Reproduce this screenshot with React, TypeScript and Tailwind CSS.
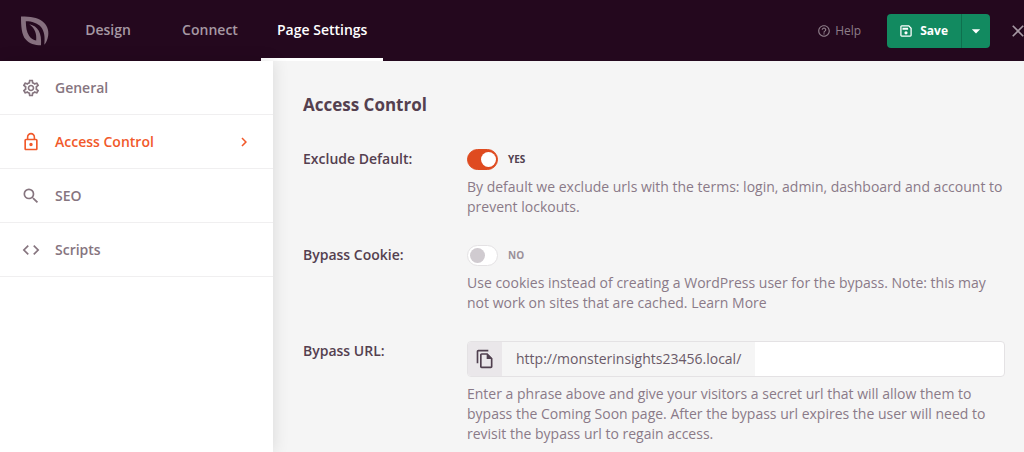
import { useState } from 'react';
import type { ReactNode } from 'react';
import {
  MdArrowDropDown,
  MdChevronRight,
  MdClose,
  MdCode,
  MdHelpOutline,
  MdLockOutline,
  MdOutlineFileCopy,
  MdOutlineSettings,
  MdSearch,
} from 'react-icons/md';

const tabs = ['Design', 'Connect', 'Page Settings'];

const sections = [
  { name: 'General', icon: MdOutlineSettings },
  { name: 'Access Control', icon: MdLockOutline },
  { name: 'SEO', icon: MdSearch },
  { name: 'Scripts', icon: MdCode },
];

function Logo() {
  return (
    <svg viewBox="0 0 28 30" className="h-[30px] w-7 shrink-0" aria-hidden="true">
      <path
        fill="#86707f"
        d="M0 .4C10 .4 16 1.200 21 5C26 8.800 28 14 27.200 19.500C26.600 23.500 25.400 26.500 23.300 28.700C24 21.500 23.600 15.500 20 11C16.400 7 11 5.400 4.800 5.300C5 11.500 5.500 16 8.200 20C10 22.600 12.300 24 15.200 24.500C15.600 18 14.500 13 8.300 8.300C17 10 21 17 20 29.300C13.500 29.300 8.500 27.800 4.800 23.600C.5 18.600 0 10 0 .4Z"
      />
    </svg>
  );
}

function SaveIcon() {
  return (
    <svg viewBox="0 0 12 12" className="size-3" fill="none" stroke="currentColor" aria-hidden="true">
      <path strokeWidth="1.300" d="M1.700.9h7.100l2.300 2.300v7.100a.8.800 0 0 1-.8.800H1.700a.8.800 0 0 1-.8-.8V1.700a.8.800 0 0 1 .8-.8Z" />
      <path fill="currentColor" stroke="none" d="M2.500 2.800h5.600v2H2.500ZM4.400 7.800a1.600 1.600 0 1 1 3.200 0 1.600 1.600 0 1 1-3.200 0Z" />
    </svg>
  );
}

function Toggle({ id, defaultChecked = false }: { id: string; defaultChecked?: boolean }) {
  const [on, setOn] = useState(defaultChecked);
  return (
    <div className="flex h-[21px] items-center gap-2.5">
      <input
        id={id}
        type="checkbox"
        role="switch"
        checked={on}
        onChange={(e) => setOn(e.target.checked)}
        className="flex h-[21px] w-[31px] cursor-pointer appearance-none items-center rounded-full border border-[#e4e2e4] bg-white px-0.5 before:size-[15px] before:rounded-full before:bg-[#d0cbd0] checked:justify-end checked:border-[#df4b20] checked:bg-[#df4b20] checked:px-px checked:before:bg-white"
      />
      <span className={on ? 'text-[10px] font-bold text-[#50404f]' : 'text-[10px] font-bold text-[#9a909a]'}>
        {on ? 'YES' : 'NO'}
      </span>
    </div>
  );
}

function Field({ id, label, help, children }: { id: string; label: string; help: ReactNode; children: ReactNode }) {
  return (
    <div className="flex">
      <label htmlFor={id} className="w-41 shrink-0 text-sm leading-5 font-semibold text-[#54404f]">
        {label}
      </label>
      <div className="min-w-0 flex-1">
        {children}
        <p className="mt-[7px] text-sm leading-5 text-[#8a7a88]">{help}</p>
      </div>
    </div>
  );
}

export default function App() {
  const [tab, setTab] = useState('Page Settings');
  const [section, setSection] = useState('Access Control');

  return (
    <div className="flex h-screen flex-col overflow-hidden bg-[#f5f5f5] font-['Open_Sans',sans-serif]">
      {/* Top bar */}
      <header className="flex h-[61px] shrink-0 items-center overflow-hidden bg-[#24081e] pl-[21px]">
        <Logo />
        <nav className="ml-2 flex h-full">
          {tabs.map((name) => (
            <button
              key={name}
              type="button"
              onClick={() => setTab(name)}
              className={
                name === tab
                  ? 'min-w-[102px] border-b-3 border-white px-4 pt-0.5 text-sm font-semibold text-white'
                  : 'min-w-[102px] border-b-3 border-transparent px-4 pt-0.5 text-sm font-semibold text-[#a698a3]'
              }
            >
              {name}
            </button>
          ))}
        </nav>
        <div className="-mr-1 ml-auto flex shrink-0 items-center">
          <a href="#help" className="flex items-center gap-1 text-[12px] text-[#8d7d89]">
            <MdHelpOutline className="size-3.5" />
            Help
          </a>
          <div className="ml-[26px] flex h-[34px] overflow-hidden rounded bg-[#128a60] text-white">
            <button type="button" className="flex items-center gap-2 px-[13px] text-[12px] font-bold">
              <SaveIcon />
              Save
            </button>
            <button
              type="button"
              aria-label="More save options"
              className="flex w-[29px] items-center justify-center border-l border-[#0e704e]"
            >
              <MdArrowDropDown className="size-5" />
            </button>
          </div>
          <button type="button" aria-label="Close" className="ml-[18px] text-[#a698a3]">
            <MdClose className="size-5" />
          </button>
        </div>
      </header>

      <div className="flex min-h-0 flex-1">
        {/* Settings sections */}
        <nav className="z-10 w-[273px] shrink-0 bg-white shadow-[0_0_16px_rgba(0,0,0,0.12)]">
          {sections.map(({ name, icon: Icon }) => (
            <button
              key={name}
              type="button"
              onClick={() => setSection(name)}
              className={
                name === section
                  ? 'flex h-[54px] w-full items-center gap-3.5 border-b border-[#f0eff0] pr-5 pl-[21px] text-sm font-semibold text-[#f1592a]'
                  : 'flex h-[54px] w-full items-center gap-3.5 border-b border-[#f0eff0] pr-5 pl-[21px] text-sm font-semibold text-[#86757f]'
              }
            >
              <Icon className="size-5" />
              {name}
              {name === section && <MdChevronRight className="ml-auto size-[18px]" />}
            </button>
          ))}
        </nav>

        {/* Access control form */}
        <main className="min-w-0 flex-1 overflow-hidden pt-8 pr-[19px] pl-[30px]">
          <h1 className="text-[17px] leading-6 font-bold text-[#54404f]">Access Control</h1>
          <form className="mt-8 flex flex-col gap-7">
            <Field
              id="exclude-default"
              label="Exclude Default:"
              help="By default we exclude urls with the terms: login, admin, dashboard and account to prevent lockouts."
            >
              <Toggle id="exclude-default" defaultChecked />
            </Field>
            <Field
              id="bypass-cookie"
              label="Bypass Cookie:"
              help={
                <>
                  Use cookies instead of creating a WordPress user for the bypass. Note: this may not work on sites that
                  are cached. <a href="#learn-more">Learn More</a>
                </>
              }
            >
              <Toggle id="bypass-cookie" />
            </Field>
            <Field
              id="bypass-url"
              label="Bypass URL:"
              help="Enter a phrase above and give your visitors a secret url that will allow them to bypass the Coming Soon page. After the bypass url expires the user will need to revisit the bypass url to regain access."
            >
              <div className="flex h-9 overflow-hidden rounded border border-[#e4e2e4] bg-white">
                <button
                  type="button"
                  aria-label="Copy URL"
                  className="flex w-[34px] shrink-0 items-center justify-center bg-[#eae7ea] text-[#50404f]"
                >
                  <MdOutlineFileCopy className="size-5" />
                </button>
                <span className="flex shrink-0 items-center bg-[#f5f5f5] px-3.5 text-sm text-[#6a5a68]">
                  http://monsterinsights23456.local/
                </span>
                <input id="bypass-url" type="text" className="min-w-0 flex-1 px-3 text-sm outline-none" />
              </div>
            </Field>
          </form>
        </main>
      </div>
    </div>
  );
}
